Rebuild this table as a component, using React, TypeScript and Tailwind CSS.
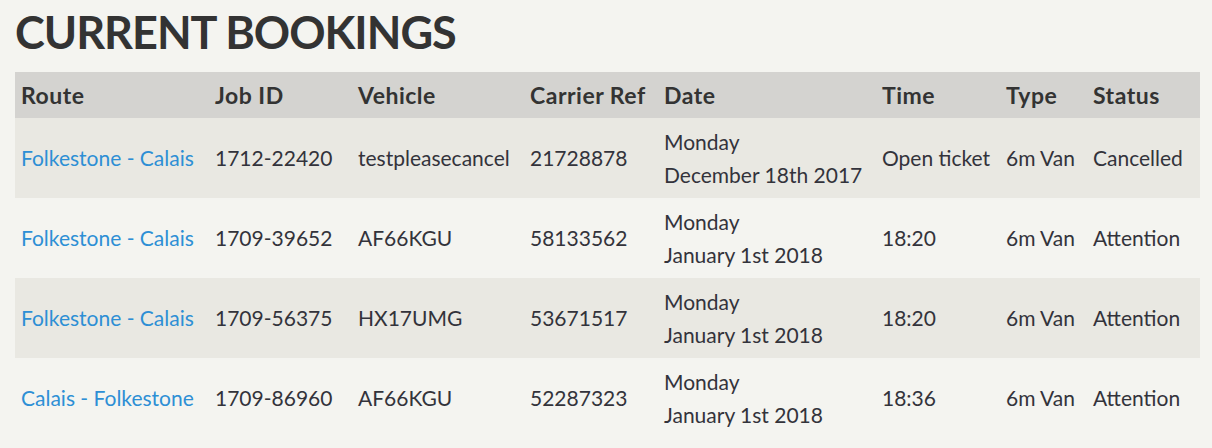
const rows = [
  {
    route: 'Folkestone - Calais',
    jobId: '1712-22420',
    vehicle: 'testpleasecancel',
    carrierRef: '21728878',
    day: 'Monday',
    date: 'December 18th 2017',
    time: 'Open ticket',
    type: '6m Van',
    status: 'Cancelled',
  },
  {
    route: 'Folkestone - Calais',
    jobId: '1709-39652',
    vehicle: 'AF66KGU',
    carrierRef: '58133562',
    day: 'Monday',
    date: 'January 1st 2018',
    time: '18:20',
    type: '6m Van',
    status: 'Attention',
  },
  {
    route: 'Folkestone - Calais',
    jobId: '1709-56375',
    vehicle: 'HX17UMG',
    carrierRef: '53671517',
    day: 'Monday',
    date: 'January 1st 2018',
    time: '18:20',
    type: '6m Van',
    status: 'Attention',
  },
  {
    route: 'Calais - Folkestone',
    jobId: '1709-86960',
    vehicle: 'AF66KGU',
    carrierRef: '52287323',
    day: 'Monday',
    date: 'January 1st 2018',
    time: '18:36',
    type: '6m Van',
    status: 'Attention',
  },
];

const headers = ['Route', 'Job ID', 'Vehicle', 'Carrier Ref', 'Date', 'Time', 'Type', 'Status'];
const widths = ['w-[194px]', 'w-[143px]', 'w-[172px]', 'w-[134px]', 'w-[218px]', 'w-[124px]', 'w-[87px]', 'w-[113px]'];

const App = () => {
  return (
    <div className="min-h-[448px] bg-[#f4f4f0] px-[15px] pt-[6px] font-['Lato','Liberation_Sans',sans-serif] text-[#33333b]">
      <h1 className="text-[45px] font-bold leading-[52px] tracking-[-1px] text-[#333333]">
        CURRENT BOOKINGS
      </h1>
      <table className="mt-[14px] w-[1185px] table-fixed border-collapse">
        <colgroup>
          {widths.map((w, i) => (
            <col key={i} className={w} />
          ))}
        </colgroup>
        <thead>
          <tr className="h-[46px] bg-[#d4d3d0]">
            {headers.map((h) => (
              <th
                key={h}
                className="px-[6px] text-left text-[23px] font-bold tracking-[0.5px] whitespace-nowrap text-[#333333]"
              >
                {h}
              </th>
            ))}
          </tr>
        </thead>
        <tbody>
          {rows.map((r, i) => (
            <tr
              key={i}
              className={`h-[80px] text-[21px] ${i % 2 === 0 ? 'bg-[#e9e8e2]' : 'bg-[#f4f4f0]'}`}
            >
              <td className="px-[6px] whitespace-nowrap">
                <a href="#" className="text-[#2d8fd5]">
                  {r.route}
                </a>
              </td>
              <td className="px-[6px]">{r.jobId}</td>
              <td className="px-[6px]">{r.vehicle}</td>
              <td className="px-[6px]">{r.carrierRef}</td>
              <td className="px-[6px] leading-[33px] whitespace-nowrap">
                <div>{r.day}</div>
                <div>{r.date}</div>
              </td>
              <td className="px-[6px] whitespace-nowrap">{r.time}</td>
              <td className="px-[6px] whitespace-nowrap">{r.type}</td>
              <td className="px-[6px]">{r.status}</td>
            </tr>
          ))}
        </tbody>
      </table>
    </div>
  );
};

export default App;
